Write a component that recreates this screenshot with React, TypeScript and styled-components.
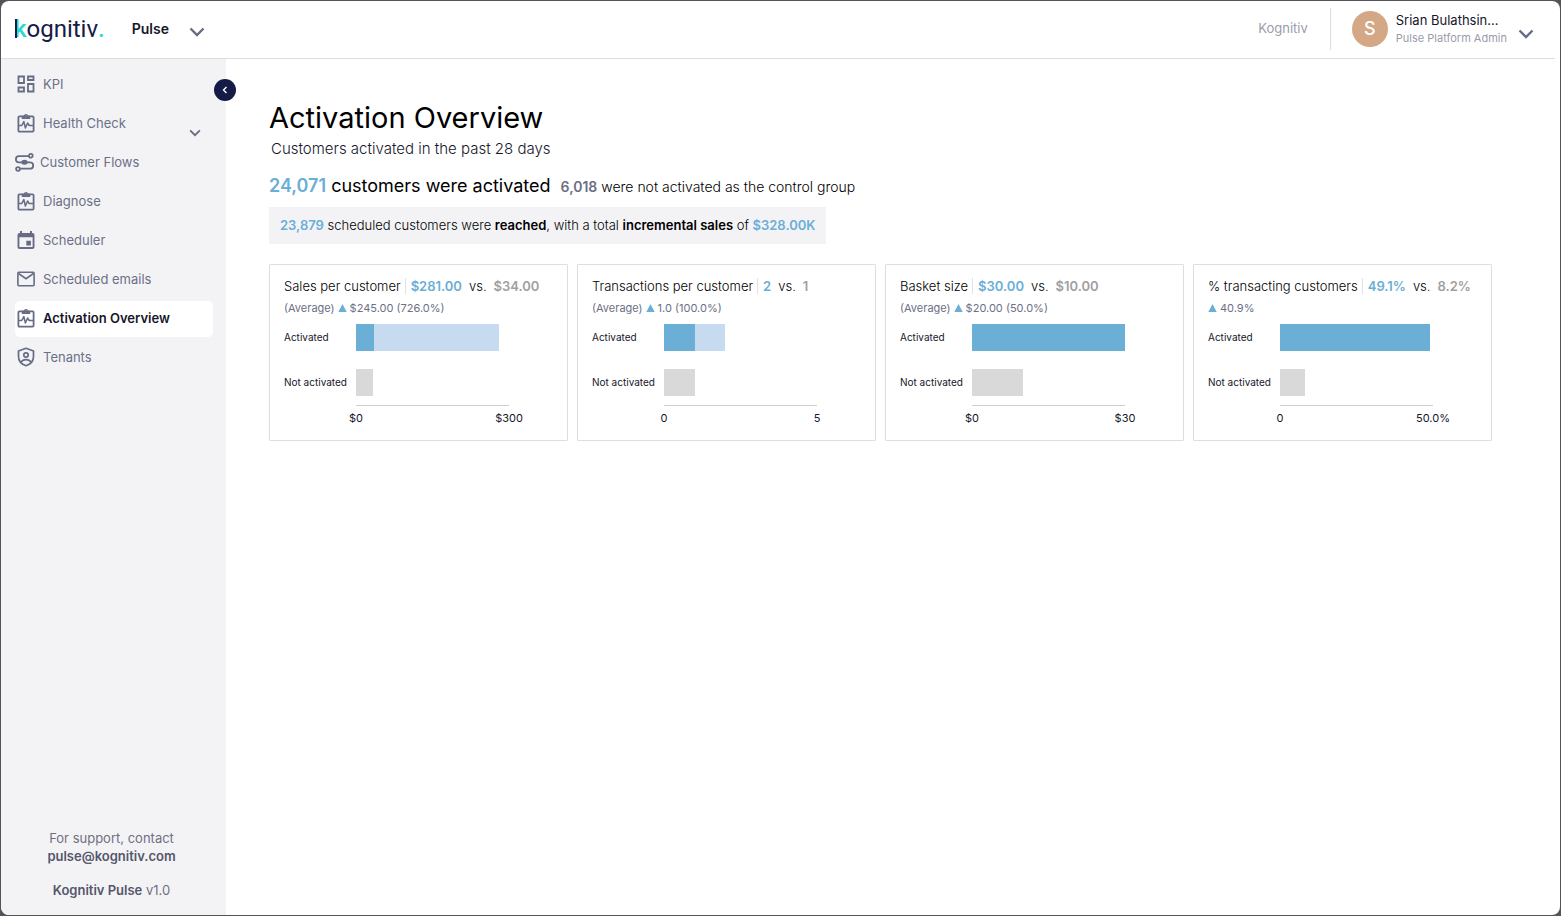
import React from "react";
import styled, { createGlobalStyle } from "styled-components";

const GlobalStyle = createGlobalStyle`
  *, *::before, *::after { box-sizing: border-box; }
  body { margin: 0; background: #55535a; font-family: Inter, "Liberation Sans", sans-serif; color: #16162b; }
  button { font: inherit; border: 0; padding: 0; background: none; color: inherit; cursor: pointer; }
  a { color: inherit; text-decoration: none; }
  h1, h2, p, ul { margin: 0; padding: 0; font-weight: 400; }
  ul { list-style: none; }
  svg { display: block; flex: none; }
`;

const Frame = styled.div`
  min-height: 100vh;
  padding: 1px;
  display: flex;
`;

const Shell = styled.div`
  flex: 1;
  min-width: 0;
  display: flex;
  flex-direction: column;
  background: #fff;
  border-radius: 8px;
  overflow: hidden;
`;

const Header = styled.header`
  height: 58px;
  margin-right: 5px;
  padding: 0 21px 2px 13px;
  display: flex;
  align-items: center;
  justify-content: space-between;
  border-bottom: 1px solid #dedee2;
`;

const HeaderGroup = styled.div`
  display: flex;
  align-items: center;
`;

const Logo = styled.a`
  position: relative;
  font-family: Roboto, sans-serif;
  font-size: 24px;
  line-height: 28px;
  color: #151b47;
`;

const LogoAccent = styled.span`
  color: #1fdccf;
  font-weight: 500;
`;

const LogoStem = styled.span`
  position: absolute;
  left: 1px;
  top: 4px;
  width: 2px;
  height: 19px;
  background: #151b47;
`;

const ProductButton = styled.button`
  margin-left: 27px;
  display: flex;
  align-items: center;
  gap: 20px;
  font-size: 14px;
  line-height: 20px;
  font-weight: 600;

  svg { margin-top: 6px; }
`;

const TenantName = styled.span`
  padding-right: 22px;
  height: 42px;
  line-height: 40px;
  font-size: 13px;
  color: #9b9cab;
  border-right: 1px solid #dedee2;
`;

const AccountButton = styled.button`
  margin-left: 21px;
  display: flex;
  align-items: center;
  text-align: left;

  > svg { margin: 10px 0 0 11px; }
`;

const Avatar = styled.span`
  width: 36px;
  height: 36px;
  margin-right: 8px;
  border-radius: 50%;
  background: #d4a886;
  color: #fff;
  font-size: 18px;
  line-height: 36px;
  font-weight: 500;
  text-align: center;
`;

const AccountText = styled.span`
  display: flex;
  flex-direction: column;
`;

const AccountName = styled.span`
  font-size: 13px;
  line-height: 18px;
`;

const AccountRole = styled.span`
  font-size: 11px;
  line-height: 18px;
  color: #9b9cab;
`;

const Body = styled.div`
  flex: 1;
  display: flex;
`;

const Sidebar = styled.aside`
  position: relative;
  flex: none;
  width: 225px;
  padding: 8px 13px 16px;
  display: flex;
  flex-direction: column;
  justify-content: space-between;
  background: #f3f3f6;
`;

const CollapseButton = styled.button`
  position: absolute;
  right: -10px;
  top: 20px;
  width: 22px;
  height: 22px;
  display: flex;
  align-items: center;
  justify-content: center;
  border-radius: 50%;
  background: #151b47;
`;

const NavList = styled.ul`
  display: flex;
  flex-direction: column;
  gap: 3px;
`;

const NavLink = styled.a<{ $active?: boolean; $wide?: boolean }>`
  height: 36px;
  padding: 0 12px 2px ${(p) => (p.$wide ? 0 : 2)}px;
  margin-left: 1px;
  display: flex;
  align-items: center;
  gap: ${(p) => (p.$wide ? 6 : 8)}px;
  border-radius: 5px;
  font-size: 13px;
  background: ${(p) => (p.$active ? "#fff" : "transparent")};
  color: ${(p) => (p.$active ? "#16162b" : "#6b7086")};
  font-weight: ${(p) => (p.$active ? 600 : 400)};

  svg { color: #666c84; }
  svg:last-child { margin: 20px 0 0 auto; }
`;

const Support = styled.footer`
  padding-right: 4px;
  text-align: center;
  font-size: 13px;
  line-height: 18px;
  color: #6e7080;

  strong { font-weight: 600; color: #55576a; }
`;

const Version = styled.p`
  margin-top: 16px;
`;

const Main = styled.main`
  flex: 1;
  min-width: 0;
  padding: 40px 68px 40px 43px;
`;

const Title = styled.h1`
  font-size: 29px;
  line-height: 38px;
  color: #000;
`;

const Caption = styled.p`
  margin-left: 2px;
  font-size: 15px;
  font-weight: 300;
  line-height: 24px;
  color: #16162b;
`;

const Summary = styled.div`
  margin-top: 12px;
  display: flex;
  align-items: baseline;
  gap: 10px;
`;

const Value = styled.strong<{ $muted?: boolean }>`
  font-weight: 600;
  color: ${(p) => (p.$muted ? "#6b7086" : "#6baed6")};
`;

const Headline = styled.p`
  font-size: 18px;
  line-height: 26px;
  color: #000;
`;

const ControlNote = styled.p`
  font-size: 14px;
  font-weight: 300;
  line-height: 26px;
  color: #000;
`;

const Reach = styled.p`
  width: fit-content;
  margin-top: 7px;
  padding: 0 11px;
  font-size: 13px;
  font-weight: 300;
  line-height: 37px;
  background: #f3f3f6;
  color: #000;

  b { font-weight: 600; }
`;

const Cards = styled.div`
  margin-top: 20px;
  display: grid;
  grid-template-columns: repeat(4, 1fr);
  gap: 9px;
`;

const Card = styled.section`
  min-width: 0;
  padding: 11px 14px 13px;
  border: 1px solid #dedede;
  border-radius: 1px;
`;

const CardHead = styled.div`
  display: flex;
  align-items: center;
  font-size: 13px;
  font-weight: 300;
  color: #000;
  line-height: 20px;
  white-space: nowrap;
`;

const CardTitle = styled.h2`
  font-size: 13px;
  font-weight: 300;
  line-height: 16px;
  padding-right: 4px;
  margin-right: 5px;
  border-right: 1px solid #dde1ea;
`;

const Versus = styled.span`
  margin: 0 7px;
`;

const Baseline = styled.strong`
  font-weight: 600;
  color: #a0a0a0;
`;

const Delta = styled.p`
  margin-top: 3px;
  display: flex;
  align-items: center;
  gap: 3px;
  font-size: 11px;
  line-height: 18px;
  color: #6b7086;
`;

const Chart = styled.div`
  margin-top: 7px;
  padding-right: 44px;
  display: grid;
  grid-template-columns: 72px 1fr;
  row-gap: 18px;
`;

const SeriesName = styled.span`
  font-size: 10px;
  line-height: 26px;
  white-space: nowrap;
`;

const Track = styled.div`
  height: 27px;
  display: flex;
`;

const Bar = styled.div<{ $tone: "strong" | "light" | "grey" }>`
  height: 100%;
  background: ${(p) => ({ strong: "#6baed6", light: "#c6dbef", grey: "#d9d9d9" })[p.$tone]};
`;

const Axis = styled.div`
  margin: 9px 44px 0 72px;
  border-top: 1px solid #cfcfcf;
`;

const Ticks = styled.div`
  margin: 3px -30px 0;
  display: flex;
  justify-content: space-between;
  font-size: 11px;
  line-height: 18px;

  span { width: 60px; text-align: center; }
`;

const Chevron = ({ size = 16, color = "#666c84", width = 2.4 }) => (
  <svg width={size} height={size} viewBox="0 0 16 16" fill="none" stroke={color} strokeWidth={width} aria-hidden="true">
    <path d="M1.5 4.5 8 11l6.500-6.500" />
  </svg>
);

const DashboardIcon = () => (
  <svg width="18" height="18" viewBox="0 0 18 18" fill="none" stroke="currentColor" strokeWidth="1.800" aria-hidden="true">
    <path d="M1.500 1.500h5.500v6.500H1.500zM11 1.500h5.500v3.500H11zM1.500 12.500h5.500v4H1.500zM11 9h5.500v7.500H11z" />
  </svg>
);

const ClipboardIcon = () => (
  <svg width="18" height="20" viewBox="0 0 18 20" fill="none" stroke="currentColor" aria-hidden="true">
    <rect x="1.400" y="3.400" width="15.200" height="15.200" rx="1" strokeWidth="1.800" />
    <path
      d="M4.800 6V2.700h1.900a2.400 2.400 0 0 1 4.600 0h1.900V6zM9 2.400a.9.900 0 1 0 0 1.800.9.900 0 0 0 0-1.800z"
      fill="currentColor"
      fillRule="evenodd"
      stroke="none"
    />
    <path d="M2 12.500h2.800l2-4 1.600 6.500 2.200-5 1.600 2.500H16" strokeWidth="1.500" strokeLinejoin="round" />
  </svg>
);

const FlowIcon = () => (
  <svg width="19" height="20" viewBox="0 0 19 20" fill="none" stroke="currentColor" strokeWidth="1.800" aria-hidden="true">
    <circle cx="15.800" cy="3.800" r="1.900" />
    <circle cx="3" cy="17" r="1.900" />
    <path d="M13.800 4.100H4a3.100 3.100 0 0 0 0 6.200h11a3.100 3.100 0 0 1 0 6.400H5.200" />
    <ellipse cx="9.500" cy="10.300" rx="3.200" ry="2.500" fill="currentColor" stroke="none" />
  </svg>
);

const CalendarIcon = () => (
  <svg width="18" height="20" viewBox="0 0 18 20" fill="currentColor" aria-hidden="true">
    <path fillRule="evenodd" d="M3 1h2v2h8V1h2v2h.500a2 2 0 0 1 2 2v12a2 2 0 0 1-2 2h-13a2 2 0 0 1-2-2V5a2 2 0 0 1 2-2H3zM2.400 7.200v9.900h13.200V7.200z" />
    <path d="M9.300 10.800h4.600v4.600H9.300z" />
  </svg>
);

const MailIcon = () => (
  <svg width="18" height="18" viewBox="0 0 18 18" fill="none" stroke="currentColor" strokeWidth="1.600" aria-hidden="true">
    <rect x="0.900" y="2.300" width="16.200" height="13.400" rx="1" />
    <path d="M1.500 3.500 9 8.700l7.500-5.200" />
  </svg>
);

const ShieldIcon = () => (
  <svg width="18" height="20" viewBox="0 0 18 20" fill="none" stroke="currentColor" strokeWidth="1.700" aria-hidden="true">
    <path d="M9 1.300 16.500 4v5.500c0 4.200-2.700 7.700-7.500 9.200-4.800-1.500-7.500-5-7.500-9.200V4z" strokeLinejoin="round" />
    <circle cx="9" cy="8" r="2.200" />
    <path d="M4 15.200c1.200-1.900 2.900-2.500 5-2.500s3.800.6 5 2.500" />
  </svg>
);

const UpIcon = () => (
  <svg width="9" height="8" viewBox="0 0 9 8" fill="#6baed6" role="img" aria-label="Up">
    <path d="M4.500 0 8.700 8H.3z" />
  </svg>
);

const navItems = [
  { label: "KPI", Icon: DashboardIcon },
  { label: "Health Check", Icon: ClipboardIcon, expandable: true },
  { label: "Customer Flows", Icon: FlowIcon, wide: true },
  { label: "Diagnose", Icon: ClipboardIcon },
  { label: "Scheduler", Icon: CalendarIcon },
  { label: "Scheduled emails", Icon: MailIcon },
  { label: "Activation Overview", Icon: ClipboardIcon, active: true },
  { label: "Tenants", Icon: ShieldIcon },
];

type Metric = {
  title: string;
  activated: string;
  control: string;
  average?: boolean;
  delta: string;
  strong: number;
  light: number;
  grey: number;
  min: string;
  max: string;
};

const metrics: Metric[] = [
  { title: "Sales per customer", activated: "$281.00", control: "$34.00", average: true, delta: "$245.00 (726.0%)", strong: 11.8, light: 81.7, grey: 11.3, min: "$0", max: "$300" },
  { title: "Transactions per customer", activated: "2", control: "1", average: true, delta: "1.0 (100.0%)", strong: 20, light: 20, grey: 20, min: "0", max: "5" },
  { title: "Basket size", activated: "$30.00", control: "$10.00", average: true, delta: "$20.00 (50.0%)", strong: 100, light: 0, grey: 33.3, min: "$0", max: "$30" },
  { title: "% transacting customers", activated: "49.1%", control: "8.2%", delta: "40.9%", strong: 98.2, light: 0, grey: 16.4, min: "0", max: "50.0%" },
];

const MetricCard = ({ metric }: { metric: Metric }) => (
  <Card>
    <CardHead>
      <CardTitle>{metric.title}</CardTitle>
      <Value>{metric.activated}</Value>
      <Versus>vs.</Versus>
      <Baseline>{metric.control}</Baseline>
    </CardHead>
    <Delta>
      {metric.average && <span>(Average)</span>}
      <UpIcon />
      <span>{metric.delta}</span>
    </Delta>
    <Chart>
      <SeriesName>Activated</SeriesName>
      <Track>
        <Bar $tone="strong" style={{ width: `${metric.strong}%` }} />
        <Bar $tone="light" style={{ width: `${metric.light}%` }} />
      </Track>
      <SeriesName>Not activated</SeriesName>
      <Track>
        <Bar $tone="grey" style={{ width: `${metric.grey}%` }} />
      </Track>
    </Chart>
    <Axis>
      <Ticks>
        <span>{metric.min}</span>
        <span>{metric.max}</span>
      </Ticks>
    </Axis>
  </Card>
);

export default function App() {
  return (
    <Frame>
      <GlobalStyle />
      <Shell>
        <Header>
          <HeaderGroup>
            <Logo href="#">
              <LogoAccent>k</LogoAccent>ognitiv<LogoAccent>.</LogoAccent>
              <LogoStem />
            </Logo>
            <ProductButton>
              Pulse
              <Chevron />
            </ProductButton>
          </HeaderGroup>
          <HeaderGroup>
            <TenantName>Kognitiv</TenantName>
            <AccountButton>
              <Avatar>S</Avatar>
              <AccountText>
                <AccountName>Srian Bulathsin...</AccountName>
                <AccountRole>Pulse Platform Admin</AccountRole>
              </AccountText>
              <Chevron />
            </AccountButton>
          </HeaderGroup>
        </Header>
        <Body>
          <Sidebar>
            <nav>
              <NavList>
                {navItems.map(({ label, Icon, active, wide, expandable }) => (
                  <li key={label}>
                    <NavLink href="#" $active={active} $wide={wide} aria-current={active ? "page" : undefined}>
                      <Icon />
                      <span>{label}</span>
                      {expandable && <Chevron size={12} />}
                    </NavLink>
                  </li>
                ))}
              </NavList>
            </nav>
            <Support>
              <p>For support, contact</p>
              <a href="mailto:pulse@kognitiv.com">
                <strong>pulse@kognitiv.com</strong>
              </a>
              <Version>
                <strong>Kognitiv Pulse</strong> v1.0
              </Version>
            </Support>
            <CollapseButton aria-label="Collapse menu">
              <svg width="8" height="8" viewBox="0 0 8 8" fill="none" stroke="#fff" strokeWidth="1.400" aria-hidden="true">
                <path d="M5.500 1 2.500 4l3 3" />
              </svg>
            </CollapseButton>
          </Sidebar>
          <Main>
            <Title>Activation Overview</Title>
            <Caption>Customers activated in the past 28 days</Caption>
            <Summary>
              <Headline>
                <Value>24,071</Value> customers were activated
              </Headline>
              <ControlNote>
                <Value $muted>6,018</Value> were not activated as the control group
              </ControlNote>
            </Summary>
            <Reach>
              <Value>23,879</Value> scheduled customers were <b>reached</b>, with a total <b>incremental sales</b> of{" "}
              <Value>$328.00K</Value>
            </Reach>
            <Cards>
              {metrics.map((metric) => (
                <MetricCard key={metric.title} metric={metric} />
              ))}
            </Cards>
          </Main>
        </Body>
      </Shell>
    </Frame>
  );
}
